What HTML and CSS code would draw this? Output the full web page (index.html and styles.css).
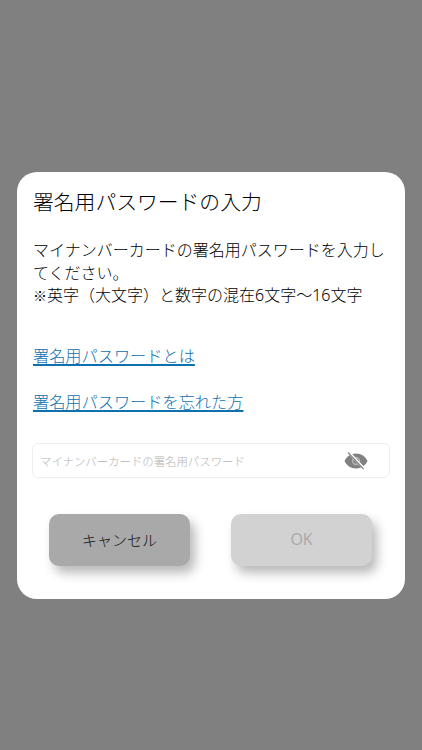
FILE: index.html
```html
<!DOCTYPE html>
<html lang="ja">
<head>
<meta charset="utf-8">
<title>署名用パスワードの入力</title>
<link rel="stylesheet" href="styles.css">
</head>
<body>
<main class="overlay">
  <section class="dialog">
    <h1 class="title">署名用パスワードの入力</h1>
    <p class="message">マイナンバーカードの署名用パスワードを入力してください。<br><span class="mark">※</span>英字（大文字）と数字の混在<span class="digit">6</span>文字〜<span class="digit">16</span>文字</p>
    <a class="link first" href="#">署名用パスワードとは</a>
    <a class="link second" href="#">署名用パスワードを忘れた方</a>
    <div class="field">
      <span class="placeholder">マイナンバーカードの署名用パスワード</span>
      <svg class="eye" viewBox="0 0 24 18" width="24" height="18" aria-hidden="true">
        <path fill="#808080" d="M12 1.500C6.800 1.500 2.400 4.600 .5 9c1.900 4.400 6.300 7.500 11.500 7.500S21.600 13.400 23.500 9C21.600 4.600 17.200 1.500 12 1.500z"/>
        <circle cx="12" cy="9" r="4.200" fill="#fff" opacity=".4"/>
        <circle cx="12" cy="9" r="2.600" fill="#808080"/>
        <path d="M4.900 .5 20.400 17" stroke="#fff" stroke-width="2.600"/>
        <path d="M4 .5 19.500 17" stroke="#808080" stroke-width="1.100"/>
      </svg>
    </div>
    <div class="actions">
      <button class="btn cancel" type="button">キャンセル</button>
      <button class="btn ok" type="button">OK</button>
    </div>
  </section>
</main>
</body>
</html>
```
FILE: styles.css
```css
* { box-sizing: border-box; }
html, body { margin: 0; height: 100%; }
body {
  font-family: "Noto Sans CJK JP", "Noto Sans", sans-serif;
  font-weight: 300;
  background: #808080;
}
.overlay {
  height: 750px;
  padding: 172px 17px 0 16px;
}
.dialog {
  height: 427px;
  margin-left: 0.5px;
  background: #fff;
  border-radius: 20px;
  padding: 16px 16px 0 16.5px;
  display: flex;
  flex-direction: column;
}
.title {
  margin: 0;
  font-size: 20.8px;
  font-weight: 300;
  line-height: 27px;
  color: #000;
}
.message {
  margin: 23px 0 0;
  font-size: 16px;
  line-height: 22.5px;
  color: #000;
}
.mark { font-size: 14px; font-weight: 700; }
.digit { font-family: "Noto Sans", sans-serif; font-weight: 300; }
.link {
  font-size: 16.2px;
  line-height: 24px;
  color: #0f70b0;
  text-decoration: underline;
  text-decoration-thickness: 1.5px;
  text-underline-offset: 2px;
  align-self: flex-start;
}
.first { margin-top: 36.5px; }
.second { margin-top: 22px; }
.field {
  margin: 30px 0 0 -1px;
  height: 35px;
  width: 358px;
  border: 1px solid #eeeeee;
  border-radius: 6px;
  display: flex;
  align-items: center;
  justify-content: space-between;
  padding: 0 21px 0 7px;
}
.placeholder { font-size: 11.4px; font-weight: 300; color: #b4b4b4; }
.eye { display: block; }
.actions {
  margin-top: 36px;
  padding-left: 16px;
  display: flex;
  gap: 41px;
}
.btn {
  width: 141px;
  height: 52px;
  border: 0;
  border-radius: 10px;
  padding: 0 0 2px;
  font-family: inherit;
  font-size: 15px;
  font-weight: 300;
  box-shadow: 5px 7px 11px rgba(0, 0, 0, 0.28);
}
.cancel { background: #a9a9a9; color: #111; }
.ok { background: #d2d2d2; color: #a8a8a8; font-family: "Open Sans", sans-serif; font-size: 16px; font-weight: 400; }
```
